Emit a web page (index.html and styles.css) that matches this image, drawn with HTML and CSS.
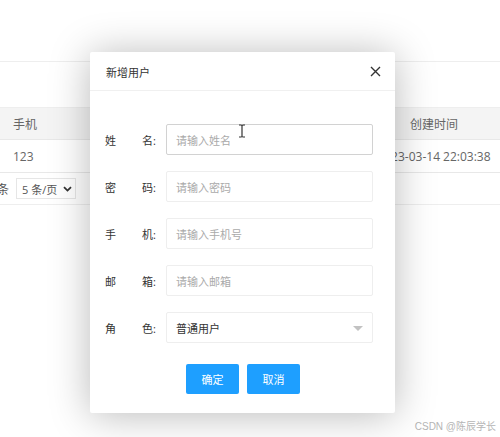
FILE: index.html
```html
<!DOCTYPE html>
<html lang="zh">
<head>
<meta charset="utf-8">
<link rel="stylesheet" href="styles.css">
</head>
<body>
<div class="page">
  <div class="topbar"></div>
  <div class="table">
    <div class="row head">
      <div class="cell c1">手机</div>
      <div class="cell c2"></div>
      <div class="cell c3">创建时间</div>
    </div>
    <div class="row">
      <div class="cell c1">123</div>
      <div class="cell c2"></div>
      <div class="cell c3">2023-03-14 22:03:38</div>
    </div>
    <div class="pager">
      <span class="pg-text">条</span>
      <div class="pg-select">5 条/页
        <svg class="chev" width="9" height="6" viewBox="0 0 9 6"><path d="M1 1.2 L4.5 4.6 L8 1.2" fill="none" stroke="#333" stroke-width="1.8"/></svg>
      </div>
    </div>
  </div>
  <div class="watermark">CSDN @陈辰学长</div>

  <div class="modal">
    <div class="modal-head">
      <span class="modal-title">新增用户</span>
      <svg class="close" width="11" height="11" viewBox="0 0 11 11"><path d="M1 1 L10 10 M10 1 L1 10" stroke="#333" stroke-width="1.4"/></svg>
    </div>
    <div class="modal-body">
      <div class="form-row">
        <label class="lbl"><span>姓</span><span>名:</span></label>
        <div class="input hover">请输入姓名</div>
      </div>
      <div class="form-row">
        <label class="lbl"><span>密</span><span>码:</span></label>
        <div class="input">请输入密码</div>
      </div>
      <div class="form-row">
        <label class="lbl"><span>手</span><span>机:</span></label>
        <div class="input">请输入手机号</div>
      </div>
      <div class="form-row">
        <label class="lbl"><span>邮</span><span>箱:</span></label>
        <div class="input">请输入邮箱</div>
      </div>
      <div class="form-row">
        <label class="lbl"><span>角</span><span>色:</span></label>
        <div class="input select">普通用户<i class="tri"></i></div>
      </div>
      <div class="btns">
        <button class="btn">确定</button>
        <button class="btn">取消</button>
      </div>
    </div>
  </div>
  <svg class="ibeam" width="8" height="14" viewBox="0 0 8 14"><path d="M1 1 H3 M5 1 H7 M4 1.5 V12.5 M1 13 H3 M5 13 H7 M3 1 Q4 1.5 5 1 M3 13 Q4 12.5 5 13" fill="none" stroke="#333" stroke-width="1.2"/></svg>
</div>
</body>
</html>
```

FILE: styles.css
```css
* { box-sizing: border-box; }
html, body { margin: 0; padding: 0; background: #fff; }
body {
  font-family: "Open Sans", "Noto Sans CJK SC", sans-serif;
  color: #555;
}
.page {
  position: relative;
  width: 500px;
  height: 437px;
  overflow: hidden;
  background: #fff;
}
.topbar {
  height: 62px;
  border-bottom: 1px solid #eee;
}
.table {
  margin-top: 45px;
}
.row {
  display: flex;
  height: 33px;
  border-bottom: 1px solid #e8e8e8;
  font-size: 12px;
  color: #666;
  align-items: center;
}
.row.head {
  background: #f4f4f4;
  border-top: 1px solid #eee;
}
.cell.c1 { width: 90px; padding-left: 13px; }
.cell.c2 { flex: 1; }
.cell.c3 { width: 130px; text-align: center; padding-right: 2px; }
.pager {
  display: flex;
  align-items: center;
  height: 32px;
  border-bottom: 1px solid #eee;
  font-size: 12px;
  color: #555;
}
.pg-text { margin-left: -3px; width: 19px; }
.pg-select {
  display: flex;
  align-items: center;
  width: 60px;
  height: 21px;
  border: 1px solid #e6e6e6;
  padding-left: 5px;
  font-size: 11px;
  color: #555;
}
.chev { margin-left: auto; margin-right: 3px; }
.watermark {
  position: absolute;
  right: 4px;
  top: 418px;
  font-size: 10px;
  color: #b5b5b5;
  font-family: "Liberation Sans", "Noto Sans CJK SC", sans-serif;
}
.modal {
  position: absolute;
  left: 90px;
  top: 52px;
  width: 305px;
  height: 361px;
  background: #fff;
  border-radius: 2px;
  box-shadow: 0 2px 40px rgba(0, 0, 0, 0.28);
}
.modal-head {
  display: flex;
  align-items: center;
  height: 39px;
  padding: 0 14px 0 16px;
  border-bottom: 1px solid #f0f0f0;
}
.modal-title {
  font-size: 11px;
  color: #333;
  padding-top: 2px;
}
.close { margin-left: auto; }
.modal-body {
  padding: 33px 22px 0 15px;
}
.form-row {
  display: flex;
  align-items: center;
  height: 31px;
  margin-bottom: 16px;
}
.lbl {
  display: flex;
  justify-content: space-between;
  width: 51px;
  margin-right: 10px;
  font-size: 11px;
  color: #333;
}
.input {
  flex: 1;
  height: 31px;
  border: 1px solid #eee;
  border-radius: 2px;
  display: flex;
  align-items: center;
  padding-left: 9px;
  font-size: 11px;
  color: #aaa;
}
.input.hover { border-color: #d2d2d2; }
.input.select { color: #333; position: relative; }
.tri {
  position: absolute;
  right: 9px;
  top: 13px;
  border-left: 5px solid transparent;
  border-right: 5px solid transparent;
  border-top: 5px solid #c2c2c2;
}
.btns {
  display: flex;
  justify-content: center;
  gap: 8px;
  padding-top: 5px;
  padding-left: 8px;
}
.btn {
  width: 53px;
  height: 30px;
  border: none;
  border-radius: 2px;
  background: #1e9fff;
  color: #fff;
  font-family: "Noto Sans CJK SC", sans-serif;
  font-size: 11px;
  padding: 0;
}
.ibeam {
  position: absolute;
  left: 238px;
  top: 124px;
}
```
